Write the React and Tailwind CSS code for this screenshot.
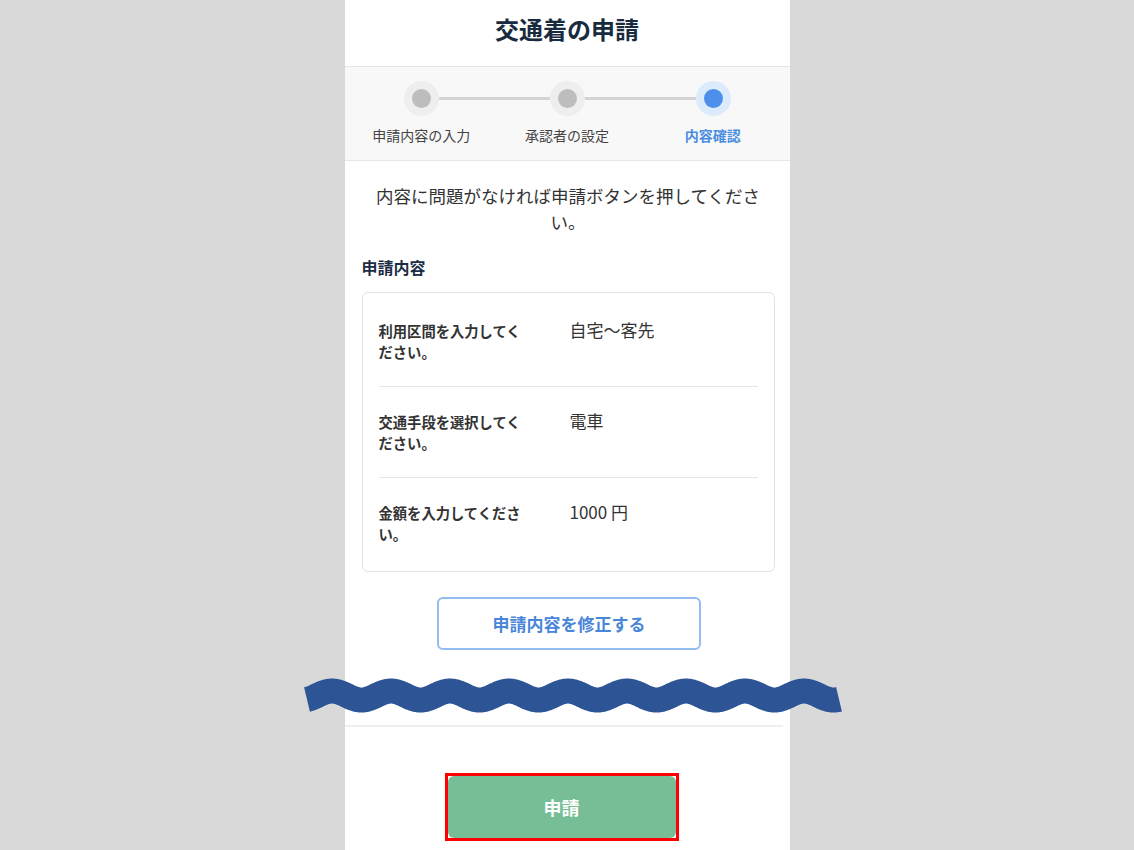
import React from 'react';

const font = { fontFamily: '"Noto Sans CJK JP", "Noto Sans", sans-serif' };

const rows = [
  { label: '利用区間を入力してください。', value: '自宅〜客先' },
  { label: '交通手段を選択してください。', value: '電車' },
  { label: '金額を入力してください。', value: '1000 円' },
];

const steps = [
  { label: '申請内容の入力', active: false },
  { label: '承認者の設定', active: false },
  { label: '内容確認', active: true },
];

// 波線（省略記号）の中心線
function wavePoints() {
  const pts = [];
  for (let x = 307; x <= 839; x += 1) {
    const y = 695.5 - 4.5 * Math.cos((2 * Math.PI * (x - 332)) / 59);
    pts.push(`${x},${y.toFixed(2)}`);
  }
  return pts.join(' ');
}

function StepDot({ active }) {
  return (
    <div
      className={`w-[35px] h-[35px] rounded-full flex items-center justify-center shrink-0 ${
        active ? 'bg-[#dcebfc]' : 'bg-[#eeeeee]'
      }`}
    >
      <div className={`w-[19px] h-[19px] rounded-full ${active ? 'bg-[#4d8fea]' : 'bg-[#bdbdbd]'}`} />
    </div>
  );
}

export default function App() {
  return (
    <div className="relative w-full h-[850px] overflow-hidden bg-[#d9d9d9]" style={font}>
      <div className="mx-auto w-[445px] h-full bg-white flex flex-col">
        {/* Header */}
        <div className="h-[67px] flex items-center justify-center border-b border-[#e6e6e6] pb-[9px]">
          <h1 className="text-[24px] font-bold text-[#182b3f]">交通着の申請</h1>
        </div>

        {/* Stepper */}
        <div className="bg-[#f8f8f8] border-b border-[#e6e6e6] pt-[14px] pb-[15px]">
          <div className="flex items-center px-[59px]">
            <StepDot active={false} />
            <div className="flex-1 h-[3px] bg-[#d4d4d4]" />
            <StepDot active={false} />
            <div className="flex-1 h-[3px] bg-[#d4d4d4]" />
            <StepDot active={true} />
          </div>
          <div className="grid grid-cols-3 px-[4px] mt-[9px]">
            {steps.map(s => (
              <div
                key={s.label}
                className={`text-center text-[14px] leading-[20px] ${
                  s.active ? 'text-[#4a8fe0] font-bold' : 'text-[#444444]'
                }`}
              >
                {s.label}
              </div>
            ))}
          </div>
        </div>

        {/* Body */}
        <div className="pl-[17px] pr-[15px]">
          <p className="px-[11px] pt-[22px] text-center text-[17.5px] leading-[26px] text-[#333333]">
            内容に問題がなければ申請ボタンを押してください。
          </p>

          <h2 className="mt-[21px] text-[16px] leading-[22px] font-bold text-[#1b2d44]">申請内容</h2>

          <div className="mt-[14px] border border-[#e2e2e2] rounded-md px-4 py-[3px]">
            {rows.map((r, i) => (
              <div
                key={r.label}
                className={`grid grid-cols-[191px_1fr] py-6 ${i > 0 ? 'border-t border-[#e6e6e6]' : ''}`}
              >
                <div className="pr-[40px] text-[14.3px] leading-[21px] font-bold text-[#333333]">{r.label}</div>
                <div className="text-[17px] leading-[19px] text-[#333333]">{r.value}</div>
              </div>
            ))}
          </div>

          <div className="flex justify-center mt-[25px] pl-[2px]">
            <button className="w-[264px] h-[53px] border-2 border-[#93bcf0] rounded-md text-[17px] font-bold text-[#4a86d8]">
              申請内容を修正する
            </button>
          </div>
        </div>

        {/* Footer */}
        <div className="mt-auto border-t-2 border-[#efefef] mr-[7px] pt-[46px] pb-[9px] pl-[100px]">
          <div className="w-[234px] border-[3px] border-[#ff0000]">
            <button className="w-full h-[62px] bg-[#77be97] rounded-md text-white text-[18px] font-bold">
              申請
            </button>
          </div>
        </div>
      </div>

      {/* 省略を示す波線 */}
      <svg
        className="absolute left-[295px] top-[665px] pointer-events-none"
        width="555"
        height="60"
        viewBox="295 665 555 60"
      >
        <polyline points={wavePoints()} fill="none" stroke="#2d5494" strokeWidth="25" strokeLinecap="butt" strokeLinejoin="round" />
      </svg>
    </div>
  );
}
